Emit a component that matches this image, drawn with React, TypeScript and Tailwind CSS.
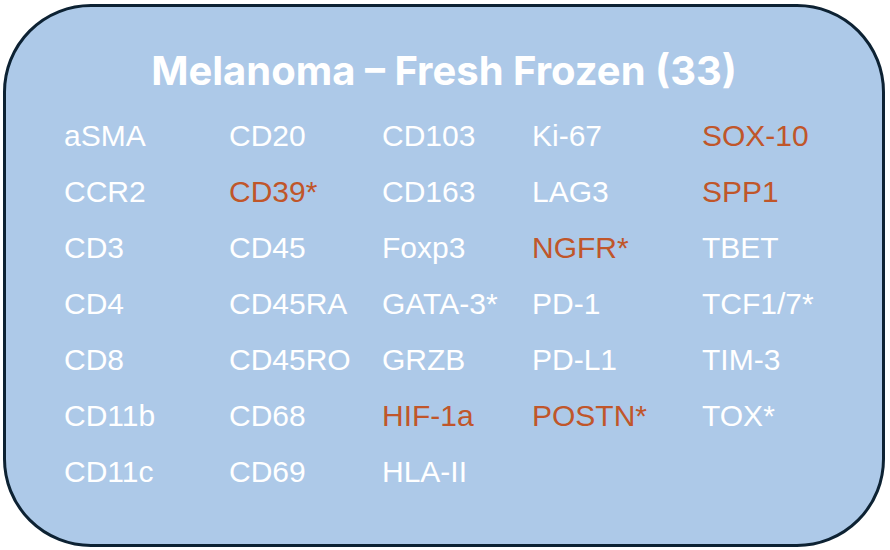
import React from "react";

const O = "text-[#c0562a]";
const W = "text-white";

const cols: [string, boolean][][] = [
  [["aSMA", false], ["CCR2", false], ["CD3", false], ["CD4", false], ["CD8", false], ["CD11b", false], ["CD11c", false]],
  [["CD20", false], ["CD39*", true], ["CD45", false], ["CD45RA", false], ["CD45RO", false], ["CD68", false], ["CD69", false]],
  [["CD103", false], ["CD163", false], ["Foxp3", false], ["GATA-3*", false], ["GRZB", false], ["HIF-1a", true], ["HLA-II", false]],
  [["Ki-67", false], ["LAG3", false], ["NGFR*", true], ["PD-1", false], ["PD-L1", false], ["POSTN*", true]],
  [["SOX-10", true], ["SPP1", true], ["TBET", false], ["TCF1/7*", false], ["TIM-3", false], ["TOX*", false]],
];

export default function App() {
  return (
    <div className="w-[890px] h-[550px] bg-white pt-[4px] pl-[3px]">
      <div className="w-[882px] h-[543px] rounded-[88px] border-[3px] border-[#0d2233] bg-[#adc9e8] flex flex-col">
        <div
          className="text-white font-bold text-[40px] text-center mt-[40px] leading-[48px]"
          style={{ fontFamily: "Inter, 'Open Sans', sans-serif" }}
        >
          Melanoma – Fresh Frozen (33)
        </div>
        <div
          className="grid grid-cols-[165px_153px_150px_170px_auto] ml-[58px] mt-[13px]"
          style={{ fontFamily: "'Liberation Sans', Arial, sans-serif" }}
        >
          {cols.map((c, i) => (
            <div key={i} className="flex flex-col">
              {c.map(([t, o]) => (
                <div key={t} className={`text-[30px] leading-[56px] ${o ? O : W}`}>
                  {t}
                </div>
              ))}
            </div>
          ))}
        </div>
      </div>
    </div>
  );
}
